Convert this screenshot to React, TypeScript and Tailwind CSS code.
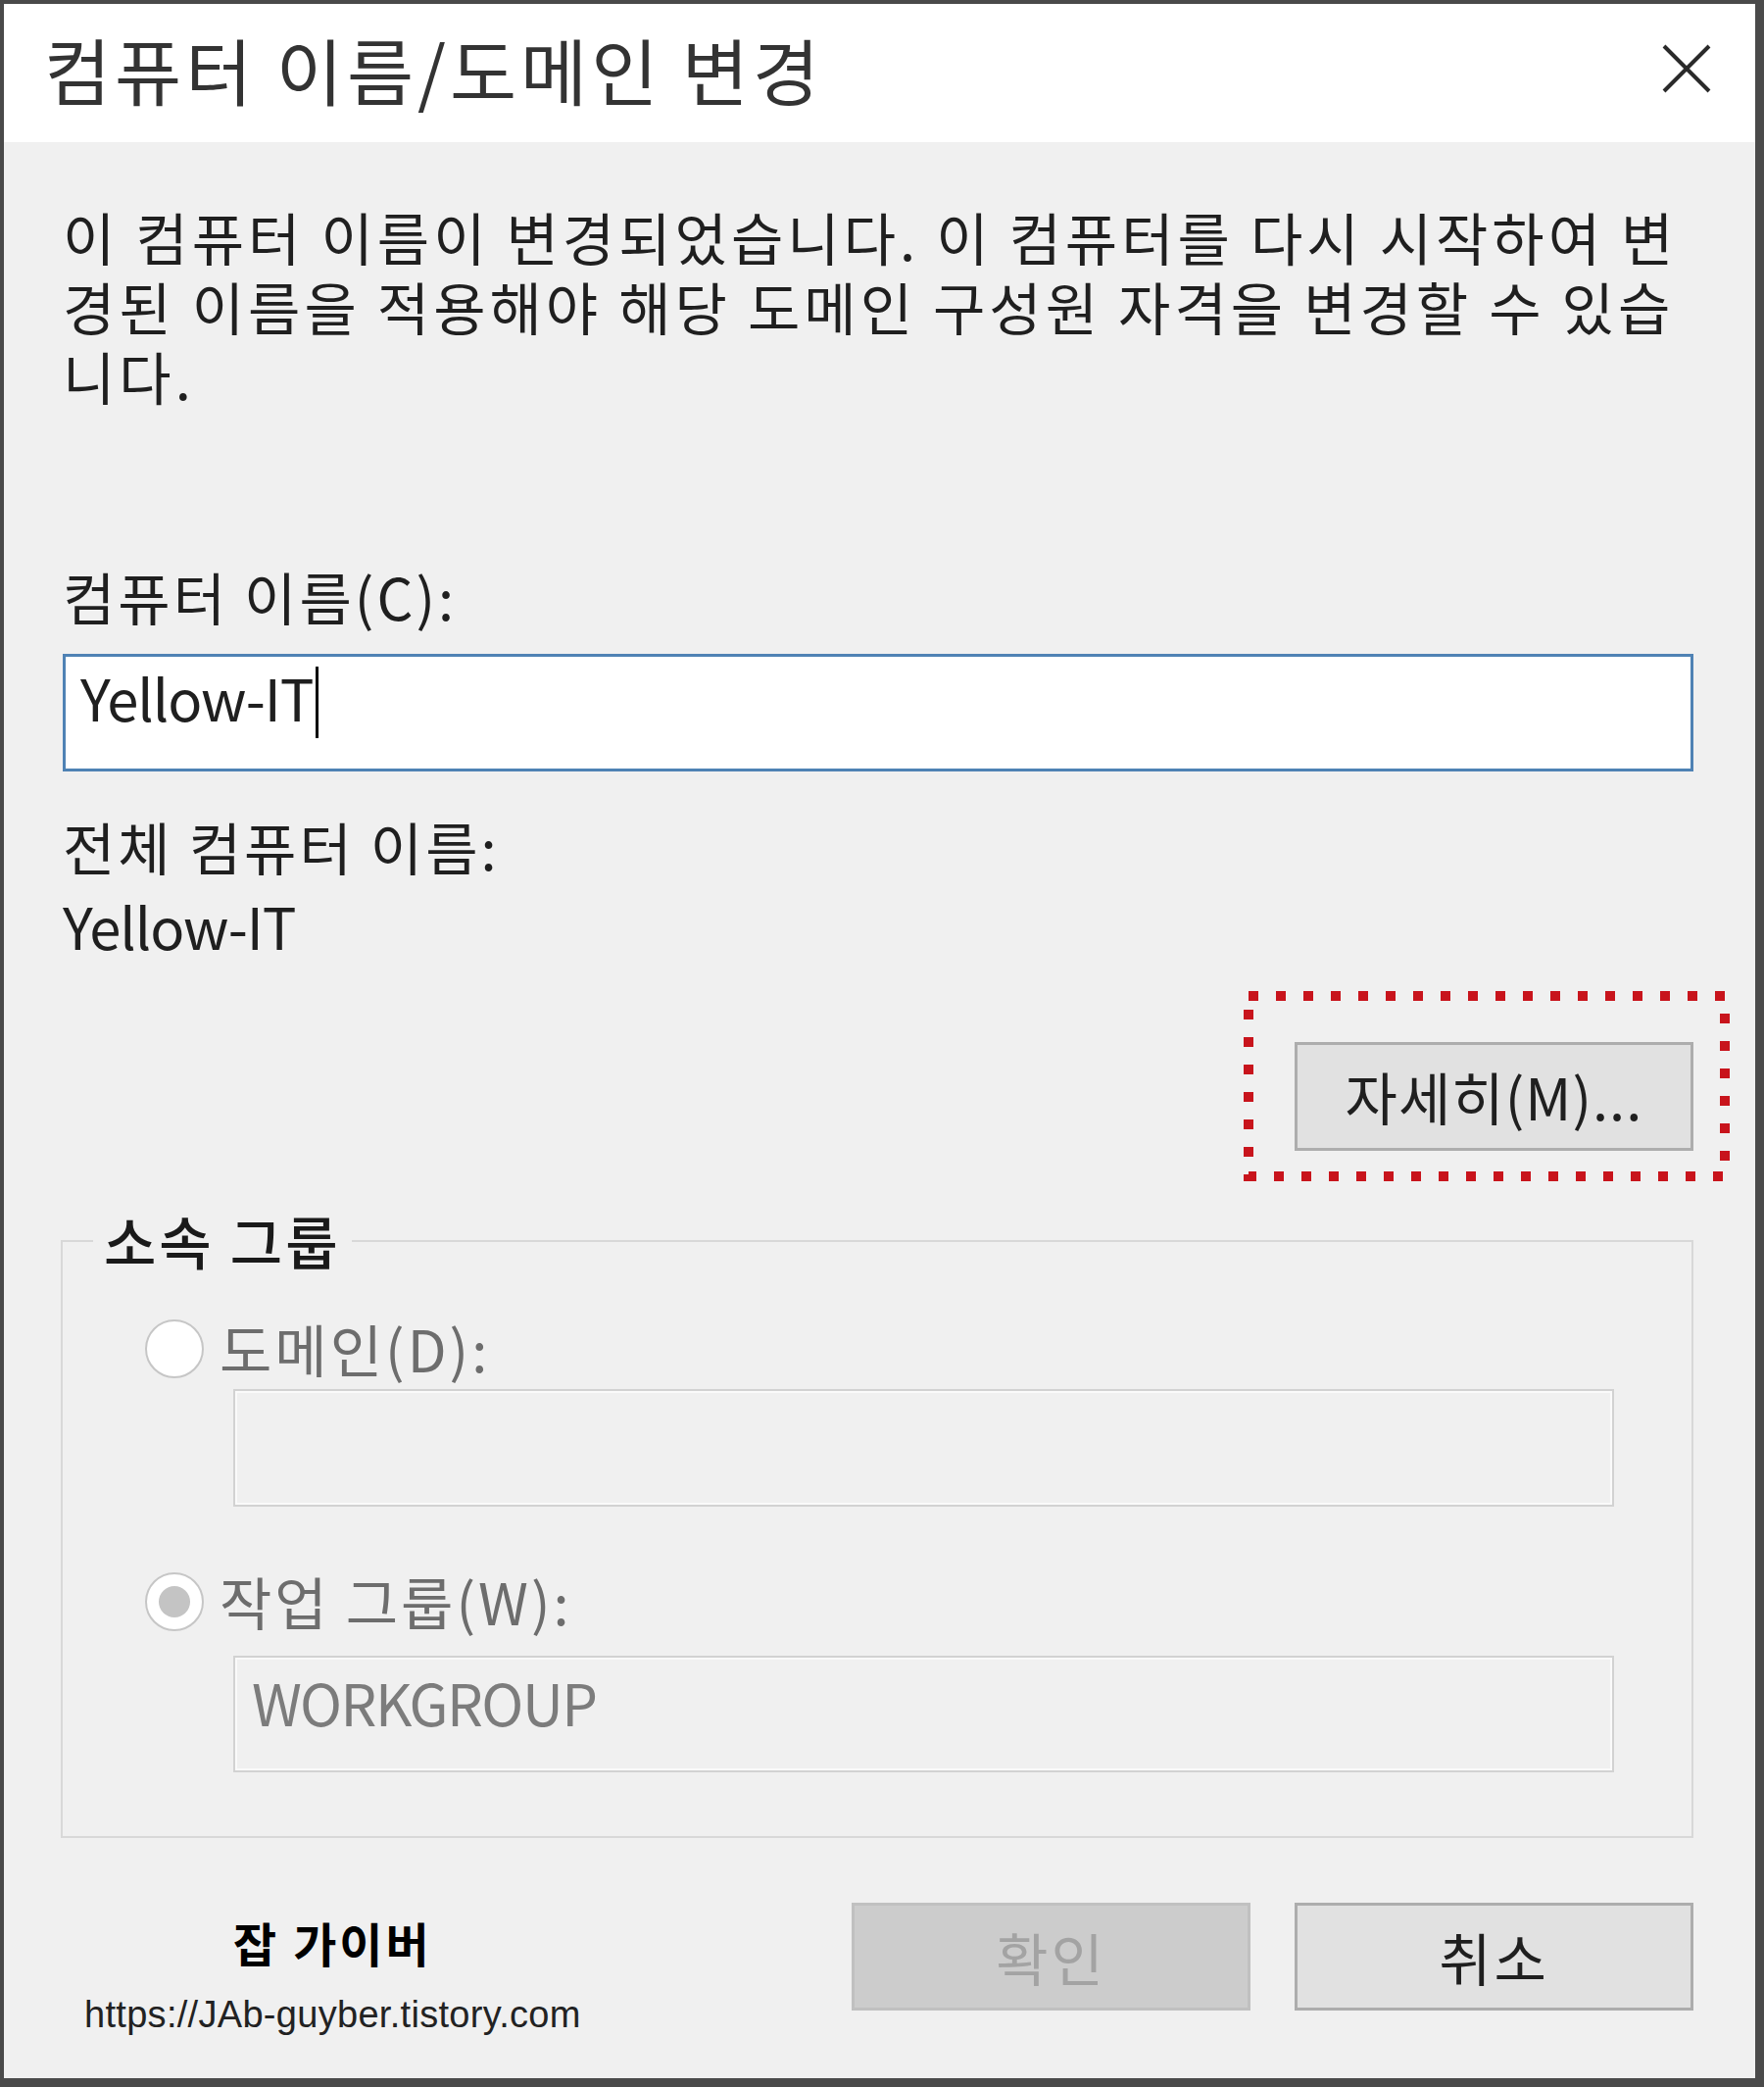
import React from "react"

// Windows "컴퓨터 이름/도메인 변경" dialog with a red dotted highlight around the 자세히 button

const Radio = ({ checked }: { checked?: boolean }) => (
  <div className="w-[60px] h-[60px] rounded-full border-2 border-[#c6c6c6] bg-white flex items-center justify-center shrink-0">
    {checked && <div className="w-[32px] h-[32px] rounded-full bg-[#c4c4c4]" />}
  </div>
)

export default function App() {
  return (
    <div className="w-[1800px] h-[2129px] bg-[#4a4a4a] pl-[4px] pt-[4px] pr-[9px] pb-[9px] font-['Noto_Sans_CJK_KR',sans-serif]">
      <div className="h-full bg-[#f0f0f0] flex flex-col">
        {/* title bar */}
        <div className="h-[141px] bg-white flex items-center justify-between pl-[41px] pr-[44px] pb-[9px] shrink-0">
          <span className="text-[74px] leading-[74px] tracking-[4px] text-[#333333] whitespace-nowrap">컴퓨터 이름/도메인 변경</span>
          <svg width="52" height="52" viewBox="0 0 52 52">
            <path d="M3 3L49 49M49 3L3 49" stroke="#2a2a2a" strokeWidth="4" fill="none" />
          </svg>
        </div>

        <div className="flex flex-col pl-[60px] pr-[63px] text-[58px] leading-[71px] tracking-[3px] text-[#1f1f1f]">
          <div className="mt-[61px] whitespace-nowrap tracking-[4px]">
            <div>이 컴퓨터 이름이 변경되었습니다. 이 컴퓨터를 다시 시작하여 변</div>
            <div>경된 이름을 적용해야 해당 도메인 구성원 자격을 변경할 수 있습</div>
            <div>니다.</div>
          </div>

          <div className="mt-[154px]">컴퓨터 이름(C):</div>
          <div className="mt-[23px] h-[120px] border-[3px] border-[#4f82b4] bg-white pl-[15px] pt-[6px] flex items-start">
            <span className="tracking-[-1px]">Yellow-IT</span>
            <div className="w-[3px] h-[73px] bg-black mt-[4px] ml-[2px]" />
          </div>

          <div className="mt-[41px]">전체 컴퓨터 이름:</div>
          <div className="mt-[10px] tracking-[-1px]">Yellow-IT</div>

          <div className="mt-[83px] flex justify-end">
            <div className="relative w-[407px] h-[111px] bg-[#e1e1e1] border-[3px] border-[#adadad] flex items-center justify-center tracking-[1px]">
              자세히(M)...
              <svg className="absolute left-[-55px] top-[-55px]" width="496" height="194" viewBox="0 0 496 194">
                <rect x="5" y="5" width="486" height="184" fill="none" stroke="#c8141c" strokeWidth="10" strokeDasharray="10 18" />
              </svg>
            </div>
          </div>

          <fieldset className="mt-[56px] ml-[-2px] border-2 border-[#d8d8d8] pb-[65px]">
            <legend className="ml-[31px] px-[11px] font-medium text-[#1a1a1a]">소속 그룹</legend>

            <div className="mt-[39px] h-[71px] flex items-center pl-[84px]">
              <Radio />
              <span className="ml-[16px] text-[#6d6d6d]">도메인(D):</span>
            </div>
            <div className="mt-[6px] ml-[174px] mr-[79px] h-[120px] border-2 border-[#d2d2d2] bg-[#f0f0f0] shadow-[inset_0_0_0_2px_#fafafa]" />

            <div className="mt-[61px] h-[71px] flex items-center pl-[84px]">
              <Radio checked />
              <span className="ml-[16px] text-[#6d6d6d]">작업 그룹(W):</span>
            </div>
            <div className="mt-[20px] ml-[174px] mr-[79px] h-[119px] border-2 border-[#d2d2d2] bg-[#f0f0f0] shadow-[inset_0_0_0_2px_#fafafa] pl-[17px] pt-[10px] text-[#7c7c7c] tracking-[-1.5px]">
              WORKGROUP
            </div>
          </fieldset>

          <div className="mt-[66px] flex items-start">
            <div className="ml-[22px] flex flex-col items-center">
              <div className="mt-[12px] text-[48px] leading-[56px] font-bold tracking-[3px] text-black">잡 가이버</div>
              <div className="mt-[24px] font-['Liberation_Sans',sans-serif] text-[38px] leading-[44px] tracking-[0.3px] text-[#222222]">
                https://JAb-guyber.tistory.com
              </div>
            </div>
            <div className="ml-auto flex gap-[45px]">
              <div className="w-[407px] h-[110px] bg-[#cccccc] border-[3px] border-[#c0c0c0] flex items-center justify-center text-[#a3a3a3]">
                확인
              </div>
              <div className="w-[407px] h-[110px] bg-[#e1e1e1] border-[3px] border-[#adadad] flex items-center justify-center">
                취소
              </div>
            </div>
          </div>
        </div>
      </div>
    </div>
  )
}
